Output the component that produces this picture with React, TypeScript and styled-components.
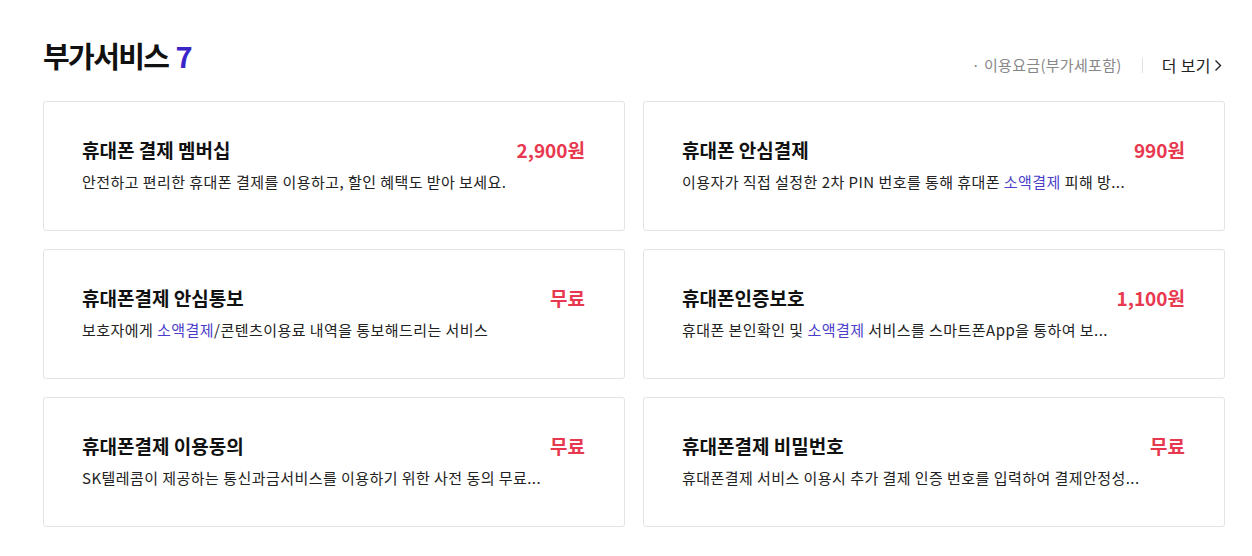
import React from "react";
import styled, { createGlobalStyle } from "styled-components";

const Global = createGlobalStyle`
  html, body { margin: 0; padding: 0; background: #fff; }
  body { font-family: "Noto Sans CJK KR", "Noto Sans", sans-serif; color: #111; }
  * { box-sizing: border-box; }
`;

const Page = styled.div`
  width: 1252px;
  padding: 34px 27px 0 43px;
`;

const Header = styled.div`
  display: flex;
  align-items: flex-end;
  justify-content: space-between;
  height: 48px;
  margin-bottom: 19px;
`;

const Title = styled.h2`
  margin: 0 0 7px;
  font-size: 29px;
  line-height: 40px;
  font-weight: 700;
  letter-spacing: -1.6px;
  color: #111;
  display: flex;
  align-items: baseline;
  gap: 7px;
`;

const Count = styled.span`
  color: #3a25c9;
  letter-spacing: 0;
`;

const Meta = styled.div`
  display: flex;
  align-items: center;
  padding-bottom: 7px;
  margin-right: 3px;
  font-size: 15px;
  line-height: 20px;
  letter-spacing: 0.3px;
`;

const Note = styled.span`
  color: #888;
`;

const Divider = styled.span`
  width: 1px;
  height: 15px;
  background: #e2e2e2;
  margin: 0 19px 0 20px;
`;

const More = styled.a`
  display: flex;
  align-items: center;
  gap: 3px;
  font-size: 16px;
  letter-spacing: 0.4px;
  color: #222;
  text-decoration: none;
`;

const Grid = styled.div`
  display: grid;
  grid-template-columns: 1fr 1fr;
  gap: 18px;
`;

const Card = styled.div`
  height: 130px;
  border: 1px solid #e3e3e3;
  border-radius: 3px;
  padding: 35px 39px 0 38px;
`;

const Top = styled.div`
  display: flex;
  justify-content: space-between;
  align-items: center;
`;

const Name = styled.div`
  font-size: 19px;
  line-height: 26px;
  font-weight: 700;
  letter-spacing: 0;
  color: #111;
`;

const Price = styled.div`
  font-size: 19px;
  line-height: 26px;
  font-weight: 700;
  letter-spacing: 0;
  color: #e8384f;
`;

const Desc = styled.p`
  margin: 8px 0 0;
  font-size: 15px;
  line-height: 22px;
  letter-spacing: 0.45px;
  color: #222;
  white-space: nowrap;
`;

const Link = styled.span`
  color: #4a3ec9;
`;

type Item = { name: string; price: string; desc: React.ReactNode };

const items: Item[] = [
  { name: "휴대폰 결제 멤버십", price: "2,900원", desc: "안전하고 편리한 휴대폰 결제를 이용하고, 할인 혜택도 받아 보세요." },
  { name: "휴대폰 안심결제", price: "990원", desc: <>이용자가 직접 설정한 2차 PIN 번호를 통해 휴대폰 <Link>소액결제</Link> 피해 방...</> },
  { name: "휴대폰결제 안심통보", price: "무료", desc: <>보호자에게 <Link>소액결제</Link>/콘텐츠이용료 내역을 통보해드리는 서비스</> },
  { name: "휴대폰인증보호", price: "1,100원", desc: <>휴대폰 본인확인 및 <Link>소액결제</Link> 서비스를 스마트폰App을 통하여 보...</> },
  { name: "휴대폰결제 이용동의", price: "무료", desc: "SK텔레콤이 제공하는 통신과금서비스를 이용하기 위한 사전 동의 무료..." },
  { name: "휴대폰결제 비밀번호", price: "무료", desc: "휴대폰결제 서비스 이용시 추가 결제 인증 번호를 입력하여 결제안정성..." },
];

export default function App() {
  return (
    <>
      <Global />
      <Page>
        <Header>
          <Title>
            부가서비스<Count>7</Count>
          </Title>
          <Meta>
            <Note>· 이용요금(부가세포함)</Note>
            <Divider />
            <More href="#">
              더 보기
              <svg width="8" height="13" viewBox="0 0 8 13" fill="none">
                <path d="M1.5 1.5 L6.5 6.5 L1.5 11.5" stroke="#222" strokeWidth="1.4" />
              </svg>
            </More>
          </Meta>
        </Header>
        <Grid>
          {items.map((it) => (
            <Card key={it.name}>
              <Top>
                <Name>{it.name}</Name>
                <Price>{it.price}</Price>
              </Top>
              <Desc>{it.desc}</Desc>
            </Card>
          ))}
        </Grid>
      </Page>
    </>
  );
}
